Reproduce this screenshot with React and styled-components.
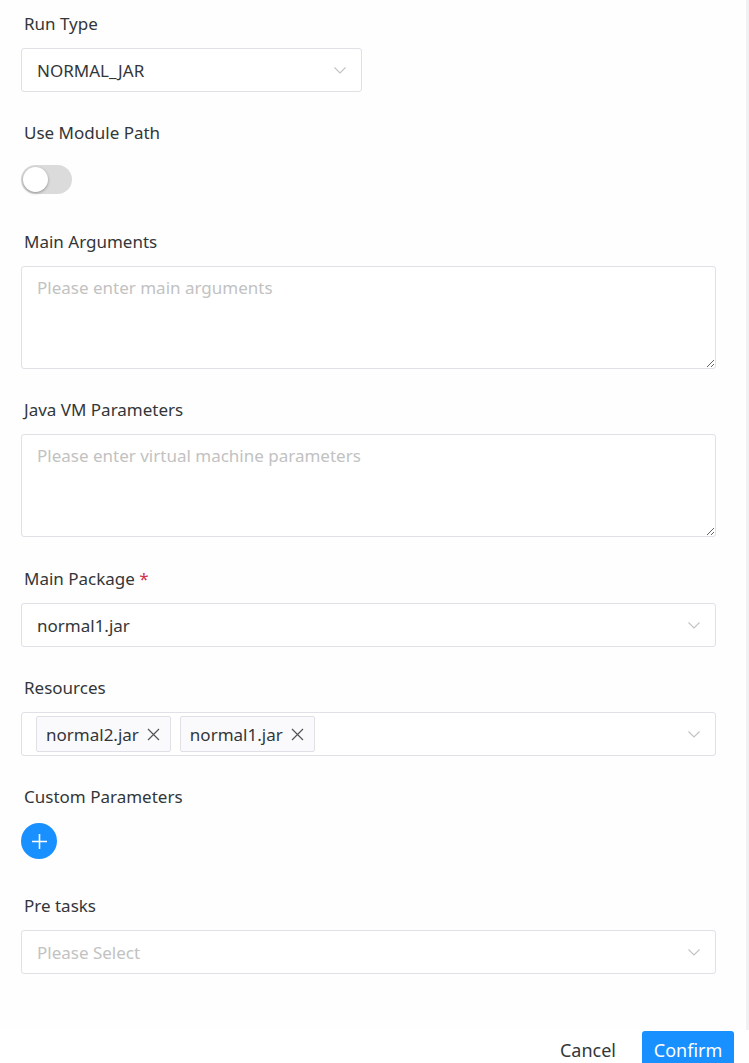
import { useState } from 'react';
import styled, { createGlobalStyle } from 'styled-components';

const GlobalStyle = createGlobalStyle`
  html, body {
    margin: 0;
    padding: 0;
    background: #fff;
  }
  body {
    font-family: 'Noto Sans', 'Open Sans', sans-serif;
    color: #333639;
  }
`;

export default function App() {
  const [useModule, setUseModule] = useState(false);
  const [resources, setResources] = useState(['normal2.jar', 'normal1.jar']);

  return (
    <Page>
      <GlobalStyle />
      <Body>
        <Form>
          <Item>
            <Label>Run Type</Label>
            <Select width='341px'>
              <Value>NORMAL_JAR</Value>
              <Arrow />
            </Select>
          </Item>

          <Item>
            <Label>Use Module Path</Label>
            <SwitchRow>
              <Switch $on={useModule} onClick={() => setUseModule(!useModule)}>
                <Knob $on={useModule} />
              </Switch>
            </SwitchRow>
          </Item>

          <Item>
            <Label>Main Arguments</Label>
            <Textarea placeholder='Please enter main arguments' />
          </Item>

          <Item $gap='30px'>
            <Label>Java VM Parameters</Label>
            <Textarea placeholder='Please enter virtual machine parameters' />
          </Item>

          <Item>
            <Label>
              Main Package <Required>*</Required>
            </Label>
            <Select>
              <Value>normal1.jar</Value>
              <Arrow />
            </Select>
          </Item>

          <Item>
            <Label>Resources</Label>
            <Select $tags>
              <Tags>
                {resources.map((r) => (
                  <Tag key={r}>
                    {r}
                    <TagClose
                      onClick={() => setResources(resources.filter((x) => x !== r))}
                    >
                      <svg width='13' height='13' viewBox='0 0 13 13'>
                        <path
                          d='M1 1L12 12M12 1L1 12'
                          stroke='#555'
                          strokeWidth='1.2'
                          fill='none'
                        />
                      </svg>
                    </TagClose>
                  </Tag>
                ))}
              </Tags>
              <Arrow />
            </Select>
          </Item>

          <Item>
            <Label>Custom Parameters</Label>
            <AddRow>
              <AddButton>
                <svg width='17' height='17' viewBox='0 0 17 17'>
                  <path d='M8.5 1V16M1 8.5H16' stroke='#fff' strokeWidth='1.6' />
                </svg>
              </AddButton>
            </AddRow>
          </Item>

          <Item>
            <Label>Pre tasks</Label>
            <Select>
              <Placeholder>Please Select</Placeholder>
              <Arrow />
            </Select>
          </Item>
        </Form>
        <Scrollbar />
      </Body>
      <Footer>
        <CancelButton>Cancel</CancelButton>
        <ConfirmButton>Confirm</ConfirmButton>
      </Footer>
    </Page>
  );
}

function Arrow() {
  return (
    <ArrowIcon width='14' height='14' viewBox='0 0 14 14'>
      <path d='M1.5 4.5L7 10L12.5 4.5' stroke='#c2c2c2' strokeWidth='1.1' fill='none' />
    </ArrowIcon>
  );
}

const Page = styled.div`
  width: 749px;
  height: 1063px;
  overflow: hidden;
  display: flex;
  flex-direction: column;
`;

const Body = styled.div`
  display: flex;
  height: 1030px;
  flex-shrink: 0;
`;

const Form = styled.div`
  flex: 1;
  padding: 12px 0 0 21px;
  background: #fefefe;
`;

const Scrollbar = styled.div`
  width: 3px;
  background: #f1f1f3;
`;

const Item = styled.div`
  margin-bottom: ${(p) => p.$gap || '29px'};
  width: 695px;
`;

const Label = styled.div`
  height: 24px;
  line-height: 24px;
  font-size: 17px;
  padding-left: 3px;
  margin-bottom: 12px;
  color: #333639;
`;

const Required = styled.span`
  color: #d03050;
`;

const Select = styled.div`
  box-sizing: border-box;
  width: ${(p) => p.width || '695px'};
  height: 44px;
  border: 1px solid #e0e0e6;
  border-radius: 3px;
  background: #fff;
  display: flex;
  align-items: center;
  padding: 0 14px 0 ${(p) => (p.$tags ? '14px' : '15px')};
`;

const Value = styled.span`
  flex: 1;
  font-size: 17px;
  color: #333639;
`;

const Placeholder = styled(Value)`
  color: #c2c2c2;
`;

const ArrowIcon = styled.svg`
  flex-shrink: 0;
`;

const Tags = styled.div`
  flex: 1;
  display: flex;
  gap: 9px;
`;

const Tag = styled.div`
  box-sizing: border-box;
  height: 36px;
  display: flex;
  align-items: center;
  gap: 8px;
  padding: 0 10px 0 9px;
  background: #fafafc;
  border: 1px solid #e0e0e6;
  border-radius: 2px;
  font-size: 17px;
  color: #333639;
`;

const TagClose = styled.span`
  display: flex;
  cursor: pointer;
`;

const SwitchRow = styled.div`
  height: 44px;
  display: flex;
  align-items: center;
`;

const Switch = styled.div`
  position: relative;
  width: 51px;
  height: 29px;
  border-radius: 15px;
  background: ${(p) => (p.$on ? '#1890ff' : '#dbdbdb')};
  cursor: pointer;
`;

const Knob = styled.div`
  position: absolute;
  top: 2px;
  left: ${(p) => (p.$on ? '24px' : '2px')};
  width: 25px;
  height: 25px;
  border-radius: 50%;
  background: #fff;
  box-shadow: 0 1px 3px rgba(0, 0, 0, 0.35);
`;

const Textarea = styled.textarea`
  box-sizing: border-box;
  display: block;
  width: 695px;
  height: 103px;
  border: 1px solid #e0e0e6;
  border-radius: 3px;
  padding: 9px 15px;
  font-family: 'Noto Sans', 'Open Sans', sans-serif;
  font-size: 17px;
  line-height: 24px;
  color: #333639;
  resize: vertical;
  outline: none;
  &::placeholder {
    color: #c2c2c2;
  }
`;

const AddRow = styled.div`
  height: 44px;
  display: flex;
  align-items: flex-start;
  padding-top: 2px;
  box-sizing: border-box;
`;

const AddButton = styled.button`
  width: 36px;
  height: 36px;
  border-radius: 50%;
  border: none;
  background: #1890ff;
  display: flex;
  align-items: center;
  justify-content: center;
  padding: 0;
  cursor: pointer;
`;

const Footer = styled.div`
  display: flex;
  justify-content: flex-end;
  align-items: flex-start;
  gap: 10px;
  padding: 1px 15px 0 0;
  background: #fff;
`;

const CancelButton = styled.button`
  height: 38px;
  border: none;
  background: none;
  font-family: 'Noto Sans', 'Open Sans', sans-serif;
  font-size: 18px;
  color: #333639;
  padding: 0 16px;
`;

const ConfirmButton = styled.button`
  height: 38px;
  width: 92px;
  border: none;
  border-radius: 3px;
  background: #1890ff;
  color: #fff;
  font-family: 'Noto Sans', 'Open Sans', sans-serif;
  font-size: 18px;
  padding: 0;
`;
